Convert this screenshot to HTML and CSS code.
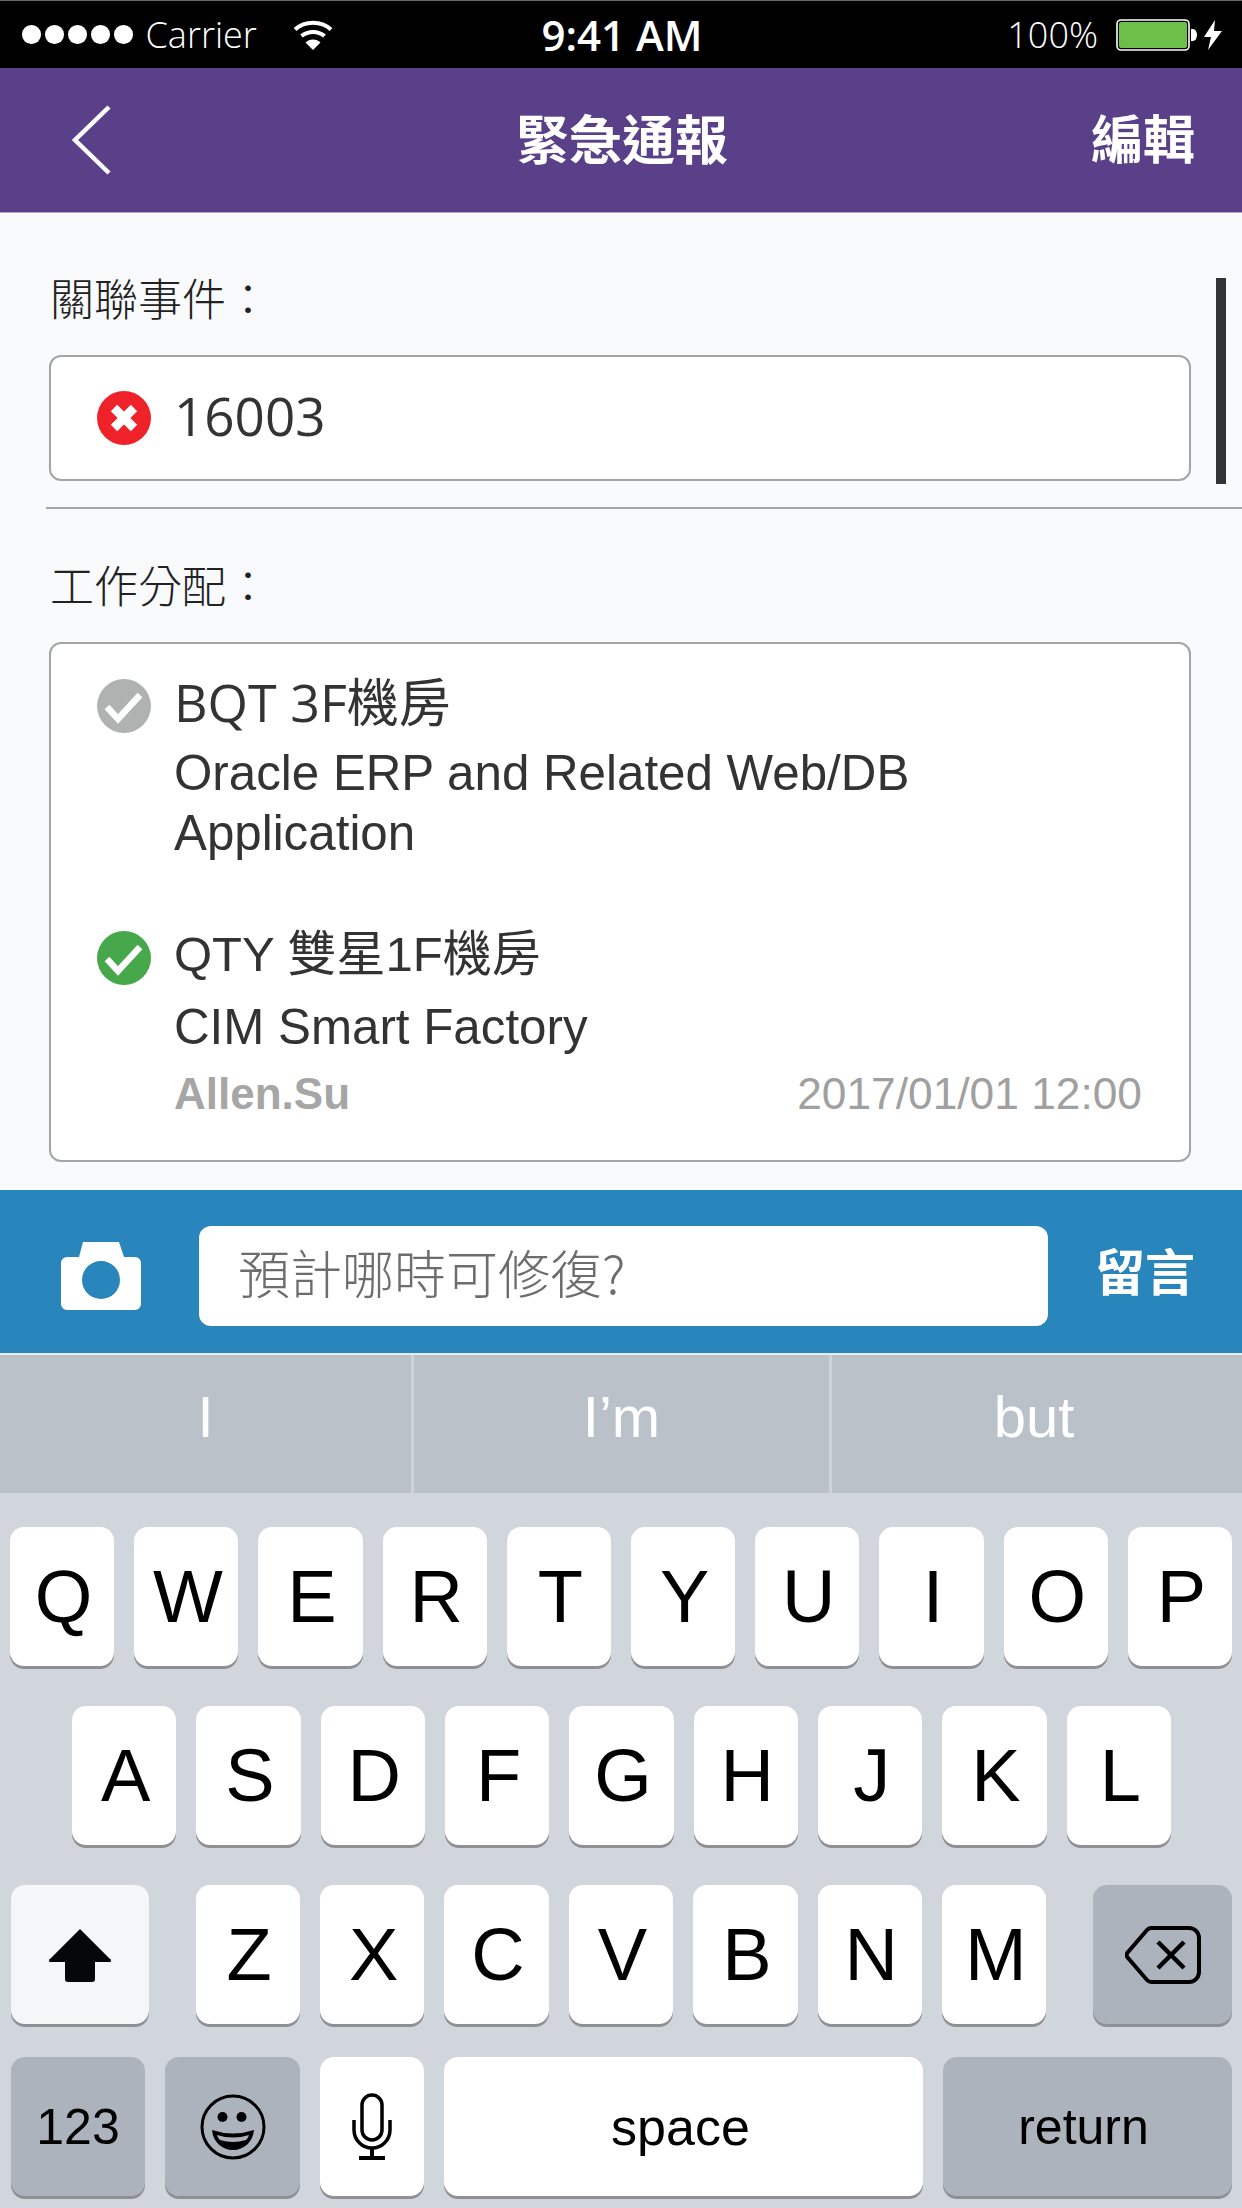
FILE: index.html
```html
<!DOCTYPE html>
<html lang="zh-Hant">
<head>
    <meta charset="UTF-8">
    <meta name="viewport" content="width=device-width, initial-scale=1.0">
    <title>緊急通報</title>
    <link rel="stylesheet" href="styles.css">
</head>
<body>

<div class="status">
    <div class="status-left">
        <span class="dots"><i></i><i></i><i></i><i></i><i></i></span>
        <span class="carrier">Carrier</span>
        <svg class="wifi" width="40" height="30" viewBox="0 0 40 30">
            <path d="M2 9.5C12 .5 28 .5 38 9.5" fill="none" stroke="#fff" stroke-width="4"/>
            <path d="M8.5 16C15 10.5 25 10.5 31.5 16" fill="none" stroke="#fff" stroke-width="4"/>
            <path d="M12.5 22.5C16.5 18.5 23.5 18.5 27.5 22.5L20 30z" fill="#fff"/>
        </svg>
    </div>
    <div class="time">9:41 AM</div>
    <div class="status-right">
        <span class="percent">100%</span>
        <svg width="82" height="34" viewBox="0 0 82 34">
            <rect x="1" y="2" width="72" height="30" rx="4" fill="#000" stroke="#fff" stroke-width="1.6"/>
            <rect x="3" y="4" width="68" height="26" rx="2" fill="#6cc04a"/>
            <path d="M75 11h2a4 6 0 0 1 0 12h-2z" fill="#fff"/>
        </svg>
        <svg class="bolt" width="18" height="30" viewBox="0 0 18 30">
            <path d="M11 0L0 17h7L4 30 18 11h-8z" fill="#fff"/>
        </svg>
    </div>
</div>

<div class="nav">
    <svg class="nav-back" width="42" height="72" viewBox="0 0 42 72">
        <path d="M38 3L4 36l34 33" fill="none" stroke="#fff" stroke-width="4.5"/>
    </svg>
    <div class="nav-title">緊急通報</div>
    <div class="nav-edit">編輯</div>
</div>

<div class="content">
    <div class="scrollbar"></div>

    <div class="label label-first">關聯事件：</div>
    <div class="box box-event">
        <svg class="state" width="54" height="54" viewBox="0 0 54 54">
            <circle cx="27" cy="27" r="27" fill="#ef2229"/>
            <path d="M17 17l20 20M37 17L17 37" stroke="#fff" stroke-width="9"/>
        </svg>
        <span class="event-no">16003</span>
    </div>

    <div class="divider"></div>

    <div class="label">工作分配：</div>
    <div class="box box-work">
        <div class="work">
            <svg class="state" width="54" height="54" viewBox="0 0 54 54">
                <circle cx="27" cy="27" r="27" fill="#b0b2b1"/>
                <path d="M10 28l11 12 22-24" fill="none" stroke="#fff" stroke-width="6.5"/>
            </svg>
            <div class="work-text">
                <div class="work-room room-open">BQT 3F<span class="room-cjk">機房</span></div>
                <div class="work-name">Oracle ERP and Related Web/DB Application</div>
            </div>
        </div>
        <div class="work work-second">
            <svg class="state" width="54" height="54" viewBox="0 0 54 54">
                <circle cx="27" cy="27" r="27" fill="#46a74b"/>
                <path d="M10 28l11 12 22-24" fill="none" stroke="#fff" stroke-width="6.5"/>
            </svg>
            <div class="work-text">
                <div class="work-room">QTY 雙星1F機房</div>
                <div class="work-name">CIM Smart Factory</div>
            </div>
        </div>
        <div class="work-meta">
            <span class="meta-name">Allen.Su</span>
            <span class="meta-date">2017/01/01 12:00</span>
        </div>
    </div>
</div>

<div class="comment">
    <svg width="80" height="68" viewBox="0 0 80 68">
        <path fill="#fff" fill-rule="evenodd" d="M18 15L22 0h36l5 15h11a6 6 0 0 1 6 6v41a6 6 0 0 1-6 6H6a6 6 0 0 1-6-6V21a6 6 0 0 1 6-6zM40 19a19 19 0 1 0 0 38 19 19 0 1 0 0-38z"/>
    </svg>
    <div class="comment-input">預計哪時可修復?</div>
    <div class="comment-send">留言</div>
</div>

<div class="suggest">
    <div class="suggest-item suggest-a">I</div>
    <div class="suggest-item suggest-b">I’m</div>
    <div class="suggest-item suggest-c">but</div>
</div>

<div class="keyboard">
    <div class="row row-top">
        <div class="key">Q</div><div class="key">W</div><div class="key">E</div><div class="key">R</div><div class="key">T</div>
        <div class="key">Y</div><div class="key">U</div><div class="key">I</div><div class="key">O</div><div class="key">P</div>
    </div>
    <div class="row row-mid">
        <div class="key">A</div><div class="key">S</div><div class="key">D</div><div class="key">F</div><div class="key">G</div>
        <div class="key">H</div><div class="key">J</div><div class="key">K</div><div class="key">L</div>
    </div>
    <div class="row row-third">
        <div class="key key-shift">
            <svg width="62" height="54" viewBox="0 0 62 54">
                <path d="M31 1L61 31a1.5 1.5 0 0 1-1 3H46v17a3 3 0 0 1-3 3H19a3 3 0 0 1-3-3V34H2a1.5 1.5 0 0 1-1-3z" fill="#050608"/>
            </svg>
        </div>
        <div class="letters">
            <div class="key">Z</div><div class="key">X</div><div class="key">C</div><div class="key">V</div>
            <div class="key">B</div><div class="key">N</div><div class="key">M</div>
        </div>
        <div class="key key-gray key-back">
            <svg width="76" height="58" viewBox="0 0 76 58">
                <path d="M26 2H64a10 10 0 0 1 10 10V46a10 10 0 0 1-10 10H26a6 6 0 0 1-4-2L3 32a4 4 0 0 1 0-6L22 4a6 6 0 0 1 4-2z" fill="none" stroke="#000" stroke-width="4"/>
                <path d="M33 16l26 26M59 16L33 42" stroke="#000" stroke-width="4.5"/>
            </svg>
        </div>
    </div>
    <div class="row row-bottom">
        <div class="key key-gray key-123">123</div>
        <div class="key key-gray key-emoji">
            <svg width="66" height="66" viewBox="0 0 66 66">
                <circle cx="33" cy="33" r="31" fill="none" stroke="#000" stroke-width="3"/>
                <circle cx="22.500" cy="23" r="5" fill="#000"/>
                <circle cx="41.500" cy="23" r="5" fill="#000"/>
                <path d="M12 36Q33 43 54 36C53 48 44 56 33 56S13 48 12 36z" fill="#000"/>
                <path d="M17 41Q33 46 49 41C48 44 47 45 46 46Q33 50 20 46C19 45 18 44 17 41z" fill="#adb3bc"/>
            </svg>
        </div>
        <div class="key key-mic">
            <svg width="42" height="68" viewBox="0 0 42 68">
                <rect x="11" y="2" width="20" height="45" rx="10" fill="none" stroke="#000" stroke-width="3.500"/>
                <path d="M3 27v10a18 18 0 0 0 36 0V27" fill="none" stroke="#000" stroke-width="3.500"/>
                <path d="M21 55v9M8 65h26" fill="none" stroke="#000" stroke-width="4"/>
            </svg>
        </div>
        <div class="key key-space">space</div>
        <div class="key key-gray key-return">return</div>
    </div>
</div>

</body>
</html>
```

FILE: styles.css
```css
* {
    box-sizing: border-box;
}
html, body {
    margin: 0;
    padding: 0;
}
body {
    width: 1242px;
    height: 2208px;
    overflow: hidden;
    font-family: "Liberation Sans", "Noto Sans CJK TC", sans-serif;
    background-color: #d1d5dc;
}
.status {
    display: grid;
    grid-template-columns: 1fr auto 1fr;
    align-items: center;
    height: 68px;
    padding: 0 20px 0 22px;
    background-color: #000;
    border-top: 1px solid #666;
    color: #fff;
    font-family: "Open Sans", sans-serif;
    font-size: 36px;
}
.status-left, .status-right {
    display: flex;
    align-items: center;
}
.status-right {
    justify-content: flex-end;
}
.dots {
    display: flex;
    gap: 4.500px;
}
.dots i {
    width: 18.500px;
    height: 18.500px;
    border-radius: 50%;
    background-color: #fff;
}
.carrier {
    margin-left: 13px;
    font-weight: 300;
}
.wifi {
    margin-left: 36px;
}
.time {
    font-weight: 600;
    font-size: 42px;
    line-height: 1;
}
.percent {
    margin-right: 18px;
    font-weight: 300;
}
.bolt {
    margin-left: 6px;
}
.nav {
    display: grid;
    grid-template-columns: 1fr auto 1fr;
    align-items: center;
    height: 145px;
    padding: 0 47px 0 49px;
    background-color: #5a4089;
    border-bottom: 1px solid #b3a8cf;
    color: #fff;
    font-family: "Noto Sans CJK TC", sans-serif;
    font-weight: 700;
}
.nav-back {
    margin-left: 22px;
}
.nav-title {
    margin-bottom: 6px;
    font-size: 53px;
    line-height: 1;
}
.nav-edit {
    justify-self: end;
    margin-bottom: 6px;
    font-size: 52px;
    line-height: 1;
}
.content {
    position: relative;
    height: 977px;
    padding-top: 62px;
    padding-left: 49px;
    background-color: #f9fafc;
}
.scrollbar {
    position: absolute;
    left: 1216px;
    top: 65px;
    width: 10px;
    height: 206px;
    background-color: #333;
}
.label {
    height: 44px;
    margin-top: 53px;
    margin-left: 1px;
    font-family: "Noto Sans CJK TC", sans-serif;
    font-size: 44px;
    font-weight: 300;
    line-height: 44px;
    color: #222;
}
.label-first {
    margin-top: 0;
}
.box {
    width: 1142px;
    margin-top: 36px;
    background-color: #fff;
    border: 2px solid #a4a4a4;
    border-radius: 12px;
}
.box-event {
    display: flex;
    align-items: center;
    height: 126px;
    padding-left: 46px;
}
.state {
    flex: none;
}
.event-no {
    margin-left: 23px;
    margin-bottom: 6px;
    font-family: "Open Sans", sans-serif;
    font-size: 53px;
    color: #333;
}
.divider {
    height: 2px;
    margin: 26px 0 0 -3px;
    background-color: #a4a4a4;
}
.box-work {
    height: 520px;
    padding: 35px 47px 0 46px;
}
.work {
    display: flex;
    align-items: flex-start;
}
.work-second {
    margin-top: 68px;
}
.work-text {
    width: 760px;
    margin-top: -7px;
    margin-left: 23px;
    color: #333;
    font-size: 49.300px;
    line-height: 60px;
}
.work-room {
    margin-bottom: 13px;
    font-size: 49px;
}
.room-open {
    margin-bottom: 11px;
    font-family: "Open Sans", "Noto Sans CJK TC", sans-serif;
    font-size: 52px;
}
.room-cjk {
    font-size: 52px;
}
.work-meta {
    display: flex;
    justify-content: space-between;
    margin: 11px 0 0 77px;
    font-size: 44.300px;
    line-height: 52px;
    color: #a0a0a0;
}
.meta-name {
    font-weight: 700;
    font-size: 44px;
    color: #a6a6a6;
}
.comment {
    display: flex;
    align-items: center;
    height: 163px;
    padding: 8px 47px 0 61px;
    background-color: #2986bc;
}
.comment-input {
    width: 849px;
    height: 100px;
    margin-left: 58px;
    padding-left: 39px;
    background-color: #fff;
    border-radius: 12px;
    font-family: "Noto Sans CJK TC", sans-serif;
    font-size: 52px;
    font-weight: 300;
    line-height: 92px;
    color: #6d6d6d;
}
.comment-send {
    margin-left: auto;
    margin-bottom: 14px;
    font-family: "Noto Sans CJK TC", sans-serif;
    font-weight: 700;
    font-size: 50px;
    line-height: 1;
    color: #fff;
}
.suggest {
    display: flex;
    height: 140px;
    background-color: #bac1c9;
    border-top: 2px solid #e6edf3;
    color: #fff;
    font-size: 58px;
}
.suggest-item {
    display: flex;
    align-items: center;
    justify-content: center;
    padding-bottom: 16px;
}
.suggest-a {
    width: 414px;
    border-right: 3px solid #ced2da;
}
.suggest-b {
    width: 418px;
    border-right: 3px solid #ced2da;
}
.suggest-c {
    flex: 1;
    padding-right: 6px;
}
.keyboard {
    padding-top: 34px;
}
.row {
    display: flex;
    gap: 20px;
    height: 139px;
    margin-top: 40px;
}
.row-top {
    margin-top: 0;
    padding: 0 10px;
}
.row-mid {
    padding: 0 71px 0 72px;
}
.row-third {
    justify-content: space-between;
    padding: 0 10px 0 11px;
}
.row-bottom {
    margin-top: 33px;
    padding: 0 10px 0 11px;
}
.letters {
    display: flex;
    gap: 20px;
    width: 851px;
}
.key {
    flex: 1;
    display: flex;
    align-items: center;
    justify-content: center;
    padding-left: 3px;
    background-color: #fff;
    border-radius: 14px;
    box-shadow: 0 3px 0 #8e9094;
    font-size: 74px;
    line-height: 1;
    color: #000;
}
.key-gray {
    background-color: #adb3bc;
}
.key-shift {
    flex: none;
    width: 138px;
    padding-left: 0;
    background-color: #f5f6f8;
}
.key-back {
    flex: none;
    width: 139px;
    padding-left: 0;
}
.key-123, .key-space, .key-return {
    padding-left: 0;
    font-size: 50px;
}
.key-123 {
    flex: none;
    width: 134px;
}
.key-emoji {
    flex: none;
    width: 135px;
    padding-left: 0;
}
.key-mic {
    flex: none;
    width: 104px;
    padding-left: 0;
}
.key-space {
    flex: none;
    width: 479px;
    padding-right: 6px;
    font-size: 52px;
}
.key-return {
    flex: none;
    width: 289px;
    padding-right: 8px;
}
```
